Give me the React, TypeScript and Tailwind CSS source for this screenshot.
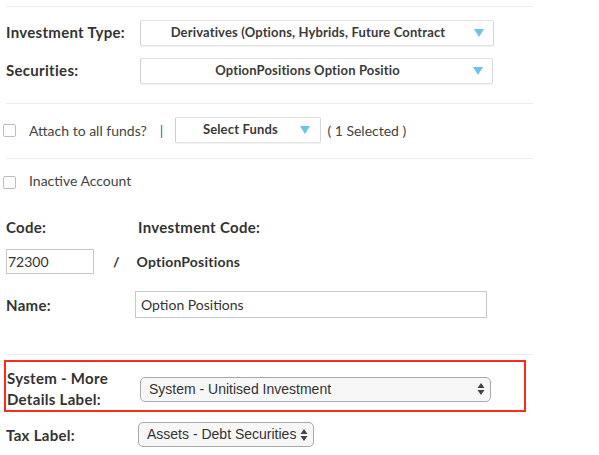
import { ReactNode } from 'react';

const font = { fontFamily: 'Lato, "Liberation Sans", sans-serif' };

function Caret() {
  return (
    <svg width="10" height="8" viewBox="0 0 10 8" className="shrink-0">
      <path d="M0 0 H10 L5 8 Z" fill="#6cc3e8" />
    </svg>
  );
}

function FancySelect({ label, className }: { label: string; className: string }) {
  return (
    <div
      className={`flex items-center border border-[#e2e2e2] border-l-[#cfcfcf] border-r-[#d6d6d6] rounded-[2px] bg-white shadow-[0_1px_1px_rgba(0,0,0,0.06)] ${className}`}
    >
      <span className="flex-1 truncate text-center text-[13px] font-bold tracking-[0.15px] text-[#3a3a3a]">
        {label}
      </span>
      <Caret />
    </div>
  );
}

function NativeSelect({ value, className }: { value: string; className: string }) {
  return (
    <div
      className={`flex items-center rounded-[5px] border border-[#a9a9a9] bg-[#f7f7f7] pl-[8px] pr-[5px] ${className}`}
      style={{ fontFamily: '"Liberation Sans", Arial, sans-serif' }}
    >
      <span className="flex-1 truncate text-[14px] text-[#333]">{value}</span>
      <svg width="8" height="14" viewBox="0 0 8 14">
        <path d="M4 1 L7.5 6 H0.5 Z M4 13 L7.5 8 H0.5 Z" fill="#444" />
      </svg>
    </div>
  );
}

function Checkbox() {
  return <div className="h-[13px] w-[13px] shrink-0 rounded-[2px] border border-[#bdbdbd] bg-white" />;
}

function Label({ children, className = '' }: { children: ReactNode; className?: string }) {
  return (
    <div className={`text-[15px] leading-[20px] font-bold tracking-[0.3px] text-[#333] ${className}`}>{children}</div>
  );
}

export default function App() {
  return (
    <div className="h-[455px] w-[599px] bg-white pl-[6px]" style={font}>
      <div className="w-[527px]">
        <div className="pt-[6px]">
          <div className="border-t border-[#ececec]" />
        </div>

        <div className="flex items-center pt-[13px]">
          <Label className="w-[134px] -mt-[3px]">Investment Type:</Label>
          <FancySelect
            label="Derivatives (Options, Hybrids, Future Contract"
            className="h-[26px] w-[354px] pl-[10px] pr-[9px] gap-[9px]"
          />
        </div>
        <div className="flex items-center pt-[12px]">
          <Label className="w-[134px] -mt-[3px]">Securities:</Label>
          <FancySelect
            label="OptionPositions Option Positio"
            className="h-[26px] w-[353px] pl-[10px] pr-[9px] gap-[9px]"
          />
        </div>

        <div className="mt-[19px] border-t border-[#ececec]" />

        <div className="flex items-center pt-[13px] -ml-[3px]">
          <Checkbox />
          <span className="ml-[13px] text-[14px] text-[#444]">Attach to all funds?</span>
          <span className="ml-[13px] text-[14px] text-[#3b5aa8]">|</span>
          <FancySelect label="Select Funds" className="ml-[12px] h-[26px] w-[146px] pl-[10px] pr-[10px] gap-[6px]" />
          <span className="ml-[6px] text-[14px] text-[#444]">( 1 Selected )</span>
        </div>

        <div className="mt-[15px] border-t border-[#ececec]" />

        <div className="flex items-center pt-[15px] -ml-[3px]">
          <Checkbox />
          <span className="ml-[13px] -mt-[4px] text-[14px] text-[#444]">Inactive Account</span>
        </div>

        <div className="flex pt-[26px]">
          <Label className="w-[132px]">Code:</Label>
          <Label>Investment Code:</Label>
        </div>

        <div className="flex items-center pt-[12px]">
          <div className="flex h-[25px] w-[88px] items-center border border-[#c8c8c8] px-[1px] text-[14px] text-[#333]">
            72300
          </div>
          <span className="ml-[19px] text-[14px] font-bold text-[#333]">/</span>
          <span className="ml-[17px] text-[14px] font-bold tracking-[0.2px] text-[#333]">OptionPositions</span>
        </div>

        <div className="flex items-center pt-[17px]">
          <Label className="w-[129px]">Name:</Label>
          <div className="flex h-[27px] w-[352px] items-center border border-[#c8c8c8] px-[5px] text-[14px] text-[#333]">
            Option Positions
          </div>
        </div>

        <div className="mt-[36px] border-t border-[#ececec]" />

        <div className="mt-[5px] -ml-[2px] h-[52px] w-[522px] border-[2px] border-[#ff2a1a] flex items-center pl-[1px] pt-[6px]">
          <Label className="w-[133px] leading-[21px]">
            System - More
            <br />
            Details Label:
          </Label>
          <NativeSelect value="System - Unitised Investment" className="h-[25px] w-[351px]" />
        </div>

        <div className="flex items-center pt-[10px]">
          <Label className="w-[132px]">Tax Label:</Label>
          <NativeSelect value="Assets - Debt Securities" className="h-[25px] w-[176px]" />
        </div>
      </div>
    </div>
  );
}
